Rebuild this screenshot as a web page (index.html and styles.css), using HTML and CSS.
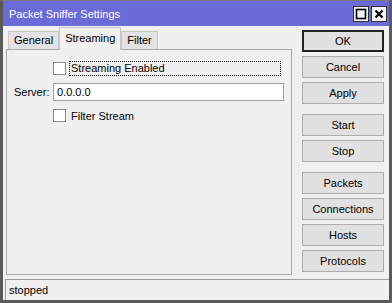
FILE: index.html
```html
<!DOCTYPE html>
<html lang="en">
<head>
    <meta charset="UTF-8">
    <title>Packet Sniffer Settings</title>
    <link rel="stylesheet" href="styles.css">
</head>
<body>
    <div class="window">
        <div class="titlebar">
            <span class="title">Packet Sniffer Settings</span>
            <div class="title-btns">
                <span class="tbtn">
                    <svg width="12" height="12" viewBox="0 0 12 12"><rect x="1.5" y="1.5" width="9" height="9" fill="none" stroke="#000" stroke-width="1.6"/></svg>
                </span>
                <span class="tbtn">
                    <svg width="12" height="12" viewBox="0 0 12 12"><path d="M2.5 2.5 L9.5 9.5 M9.5 2.5 L2.5 9.5" stroke="#000" stroke-width="2.2"/></svg>
                </span>
            </div>
        </div>
        <div class="main">
            <div class="left">
                <div class="tabs">
                    <div class="tab">General</div>
                    <div class="tab active">Streaming</div>
                    <div class="tab">Filter</div>
                </div>
                <div class="panel">
                    <div class="row">
                        <span class="check"></span>
                        <span class="focus-label">Streaming Enabled</span>
                    </div>
                    <div class="row field">
                        <label class="lbl">Server:</label>
                        <div class="input">0.0.0.0</div>
                    </div>
                    <div class="row">
                        <span class="check"></span>
                        <span class="cb-label">Filter Stream</span>
                    </div>
                </div>
            </div>
            <div class="buttons">
                <button class="btn default">OK</button>
                <button class="btn">Cancel</button>
                <button class="btn">Apply</button>
                <div class="spacer"></div>
                <button class="btn">Start</button>
                <button class="btn">Stop</button>
                <div class="spacer"></div>
                <button class="btn">Packets</button>
                <button class="btn">Connections</button>
                <button class="btn">Hosts</button>
                <button class="btn">Protocols</button>
            </div>
        </div>
        <div class="statusbar">stopped</div>
    </div>
</body>
</html>
```

FILE: styles.css
```css
body {
    margin: 0;
    font-family: 'Liberation Sans', Arial, sans-serif;
    font-size: 11px;
    color: #000;
    background-color: #f0f0f0;
}
.window {
    width: 392px;
    height: 303px;
    box-sizing: border-box;
    border: 3px solid #5a5a5a;
    border-top: 1px solid #7a7a7a;
    background-color: #f0f0f0;
    display: flex;
    flex-direction: column;
}
.titlebar {
    height: 25px;
    background-color: #6b6bd8;
    display: flex;
    align-items: center;
    justify-content: space-between;
    padding: 0 2px 0 6px;
}
.title {
    color: #fff;
    font-size: 11px;
}
.title-btns {
    display: flex;
    gap: 2px;
}
.tbtn {
    width: 14px;
    height: 14px;
    background-color: #f4f4f4;
    border: 1px solid #333;
    display: flex;
    align-items: center;
    justify-content: center;
}
.main {
    flex: 1;
    display: flex;
    padding: 0 0 0 3px;
}
.left {
    width: 286px;
    display: flex;
    flex-direction: column;
}
.tabs {
    display: flex;
    padding-left: 2px;
    height: 23px;
    align-items: flex-end;
}
.tab {
    height: 17px;
    line-height: 17px;
    padding: 0 5px;
    background-color: #e3e3e3;
    border: 1px solid #c8c8c8;
    border-bottom: none;
}
.tab.active {
    height: 22px;
    line-height: 20px;
    background-color: #f0f0f0;
    border-color: #c8c8c8;
    margin-bottom: -1px;
    position: relative;
    z-index: 1;
}
.panel {
    height: 226px;
    border: 1px solid #a8a8a8;
    background-color: #f0f0f0;
    padding-top: 11px;
    box-sizing: border-box;
}
.row {
    display: flex;
    align-items: center;
    height: 15px;
    padding-left: 46px;
}
.row.field {
    height: 18px;
    margin: 7px 0 7px;
    padding-left: 7px;
}
.check {
    width: 11px;
    height: 11px;
    border: 1px solid #8a8a8a;
    background-color: #fff;
    margin-right: 3px;
}
.focus-label {
    flex: 1;
    margin-right: 10px;
    border: 1px dotted #000;
    padding: 0 1px;
    line-height: 13px;
}
.cb-label {
    padding-left: 2px;
}
.lbl {
    width: 39px;
}
.input {
    width: 226px;
    height: 16px;
    line-height: 16px;
    border: 1px solid #a0a0a0;
    background-color: #fff;
    padding-left: 3px;
}
.buttons {
    display: flex;
    flex-direction: column;
    gap: 4px;
    margin-left: 10px;
    padding-top: 4px;
}
.spacer {
    height: 2px;
}
.btn {
    width: 82px;
    height: 22px;
    font-family: inherit;
    font-size: 11px;
    background-color: #e1e1e1;
    border: 1px solid #adadad;
    padding: 0;
}
.btn.default {
    border: 2px solid #222;
}
.statusbar {
    height: 21px;
    line-height: 20px;
    margin: 2px 0 0 2px;
    border-top: 1px solid #a0a0a0;
    border-left: 1px solid #a0a0a0;
    padding-left: 3px;
    box-sizing: border-box;
}
```
